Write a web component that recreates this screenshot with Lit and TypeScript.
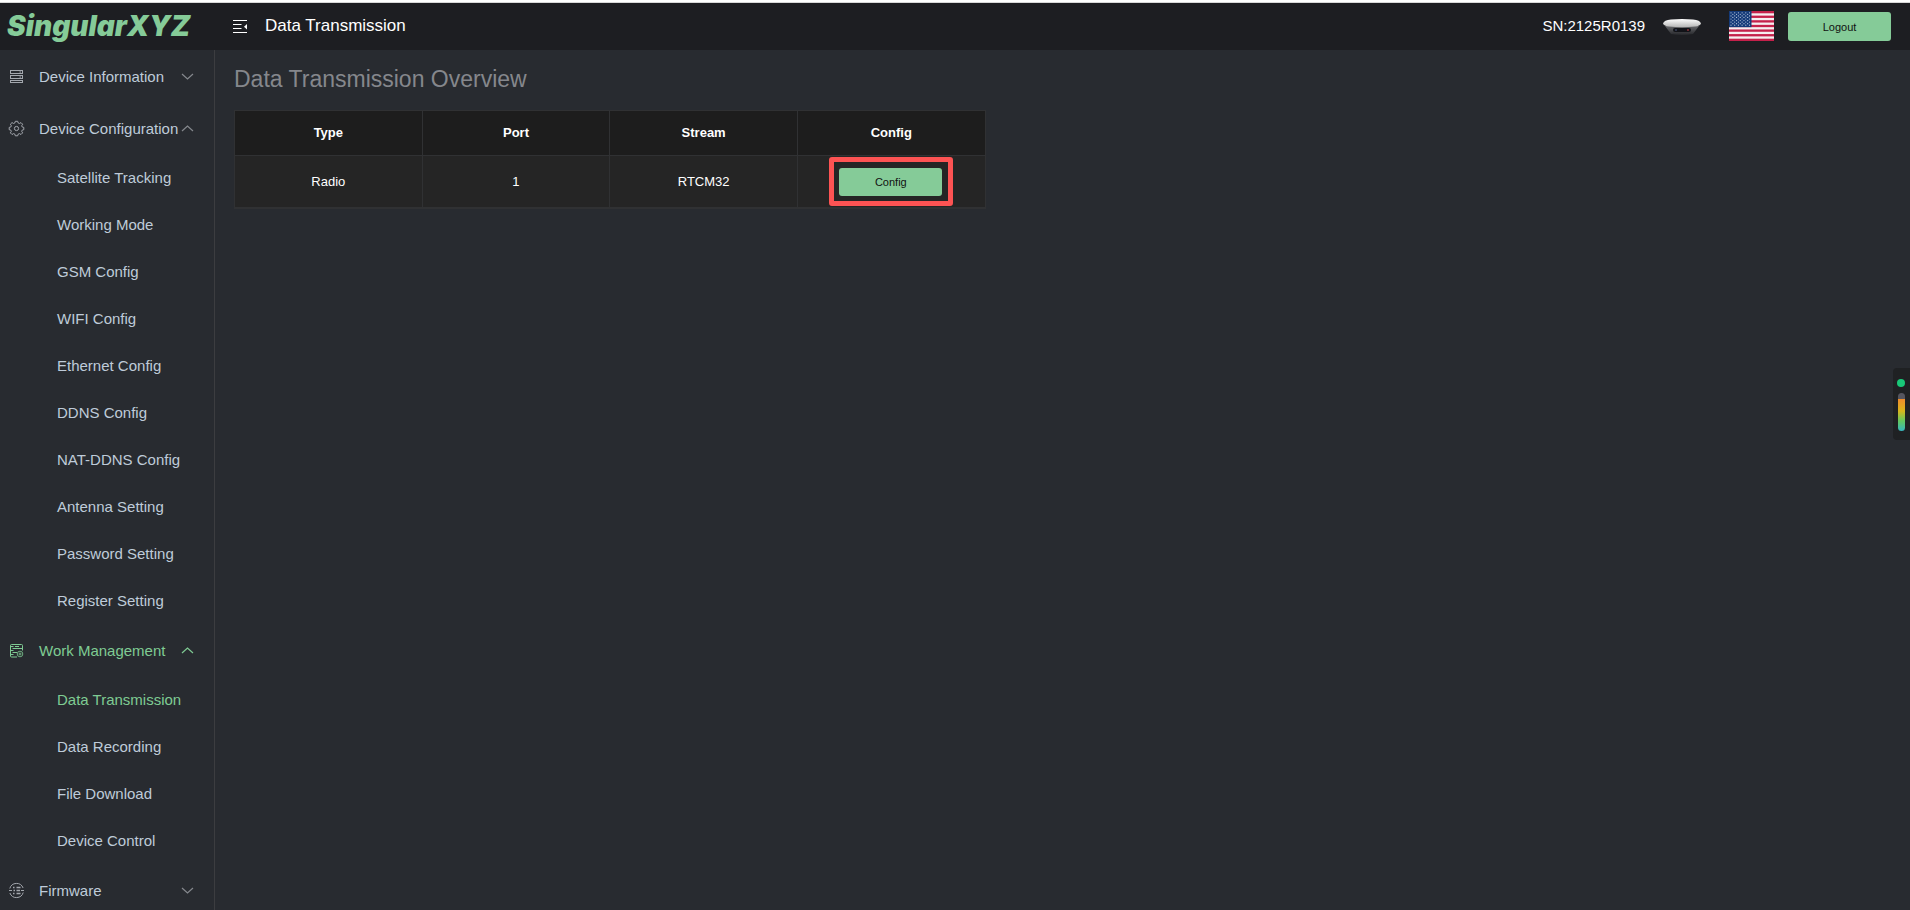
import { LitElement, html, css, svg, nothing } from "lit";
import { customElement, state } from "lit/decorators.js";

interface Group {
  label: string;
  icon: string;
  open: boolean;
  items: string[];
}

const icons: Record<string, unknown> = {
  server: svg`
    <path d="M2 2.500h13M2 5.500h13M2 7.500h13M2 10.500h13M2 12.500h13M2 14.500h13" />
    <path d="M2.500 2v4M14.500 2v4M2.500 7v4M14.500 7v4M2.500 12v3M14.500 12v3M11.500 4h1.500M11.500 9h1.500" />`,
  gear: svg`
    <circle cx="8.500" cy="8.500" r="2.100" />
    <path stroke-linejoin="round" d="M6.800 3 7.300 1.300h2.400l.5 1.700 1.200.5 1.600-.9 1.600 1.600-.9 1.600.5 1.200 1.600.4v2.300l-1.600.4-.5 1.200.9 1.600-1.600 1.600-1.600-.9-1.200.5-.5 1.700H7.300l-.5-1.700-1.200-.5-1.600.9-1.600-1.600.9-1.600-.5-1.200-1.600-.4V7.400l1.600-.4.5-1.200-.9-1.600 1.600-1.600 1.600.9z" />`,
  work: svg`
    <path d="M14.500 8.500V3.500a1 1 0 0 0-1-1h-10a1 1 0 0 0-1 1v10.500a1 1 0 0 0 1 1H9M4.500 6.500h10M4.500 10.500h4.500M3 4.500h2.500M7 4.500h4M3 8.500h2.500M3 12.500h2.500" />
    <circle cx="12" cy="12" r="2.800" stroke-width=".8" /><circle cx="12" cy="12" r="1" stroke-width=".8" />`,
  firmware: svg`
    <path d="M1.800 6.500a7 7 0 0 1 13.300-.5M15.200 10.500a7 7 0 0 1-13.300.5M1 8.500h3M13 8.500h3" />
    <path d="M5 5.500h1.500M8.500 5.500h4M5.500 8.500h1.500M8.500 8.500h3.500M5 11.500h1.500M8.500 11.500h4" stroke-width="1.300" />`,
};

@customElement("app-root")
export class AppRoot extends LitElement {
  @state() private groups: Group[] = [
    { label: "Device Information", icon: "server", open: false, items: [] },
    {
      label: "Device Configuration",
      icon: "gear",
      open: true,
      items: [
        "Satellite Tracking", "Working Mode", "GSM Config", "WIFI Config", "Ethernet Config",
        "DDNS Config", "NAT-DDNS Config", "Antenna Setting", "Password Setting", "Register Setting",
      ],
    },
    {
      label: "Work Management",
      icon: "work",
      open: true,
      items: ["Data Transmission", "Data Recording", "File Download", "Device Control"],
    },
    { label: "Firmware", icon: "firmware", open: false, items: [] },
  ];

  @state() private current = "Data Transmission";

  private rows = [{ type: "Radio", port: "1", stream: "RTCM32" }];

  static styles = css`
    :host {
      display: flex;
      flex-direction: column;
      height: 100vh;
      box-sizing: border-box;
      border-top: 2px solid #fff;
      background: #282b30;
      color: #fff;
      font-family: "Liberation Sans", Arial, sans-serif;
      font-size: 15px;
      overflow: hidden;
    }
    * { box-sizing: border-box; }
    header {
      display: flex;
      align-items: center;
      flex: none;
      height: 48px;
      padding: 0 19px 0 7px;
      border-top: 1px solid #d8d8d8;
      background: #1d1e22;
    }
    .logo {
      width: 188px;
      padding-bottom: 2px;
      color: #85cb98;
      font: italic 900 28px/36px Inter, sans-serif;
      white-space: nowrap;
    }
    .fold {
      display: flex;
      margin-left: 36px;
      padding: 0;
      border: 0;
      background: none;
      color: #fff;
    }
    .title { flex: 1; margin: 0 0 0 17px; padding-bottom: 2px; font-size: 17px; line-height: 20px; font-weight: 400; }
    .serial { padding-bottom: 2px; line-height: 20px; }
    .device { width: 42px; height: 20px; margin-left: 16px; }
    .flag { display: flex; margin-left: 26px; padding: 0 0 2px; border: 0; background: none; }
    .btn {
      width: 103px;
      height: 28px;
      padding: 0;
      border: 0;
      border-radius: 3px;
      background: #85cb98;
      color: #111;
      font: 11px/28px "Liberation Sans", Arial, sans-serif;
    }
    .btn.logout { height: 29px; margin-left: 14px; }
    .body { display: flex; flex: 1; min-height: 0; }
    nav {
      flex: none;
      width: 215px;
      border-right: 1px solid #3c3d40;
      overflow: hidden;
    }
    ul { margin: 0; padding: 0; list-style: none; }
    .group {
      display: flex;
      align-items: center;
      width: 100%;
      height: 52px;
      padding: 0 20px 0 8px;
      border: 0;
      background: none;
      color: #bfcbd9;
      font: inherit;
      text-align: left;
    }
    .group span { flex: 1; margin-left: 14px; white-space: nowrap; }
    .group .mark { color: #a3a7ad; }
    .group .arrow { color: #85888d; }
    .group.on, .group.on .mark, .group.on .arrow { color: #7fcb93; }
    .item {
      display: block;
      height: 47px;
      padding-left: 57px;
      line-height: 48px;
      color: #bfcbd9;
      text-decoration: none;
    }
    .item.on { color: #7fcb93; }
    svg { flex: none; display: block; }
    main { flex: 1; min-width: 0; padding: 14px 36px 14px 19px; }
    h2 { margin: 0; font-size: 23px; line-height: 30px; font-weight: 400; color: #85878c; }
    table {
      width: calc(100% * 11 / 24);
      margin-top: 16px;
      border-collapse: collapse;
      table-layout: fixed;
      border: 1px solid #303133;
      border-bottom-width: 2px;
      background: #252525;
      font-size: 13px;
      text-align: center;
    }
    th, td { padding: 0; border: 1px solid #303133; }
    th { height: 45px; padding-bottom: 2px; background: #1d1d1d; font-weight: 700; }
    td { height: 52px; }
    .focus {
      display: inline-block;
      padding: 6px 6px 5px 5px;
      border: 5px solid #fd5353;
      border-radius: 3px;
      vertical-align: middle;
    }
    .focus .btn { display: block; }
    .meter {
      position: absolute;
      right: 0;
      top: 368px;
      display: flex;
      flex-direction: column;
      align-items: center;
      gap: 6px;
      width: 17px;
      height: 72px;
      padding: 11px 1px 0 0;
      border-radius: 4px 0 0 4px;
      background: #1f2123;
    }
    .dot { width: 8px; height: 8px; border-radius: 50%; background: #19c878; }
    .bar {
      width: 7px;
      height: 38px;
      border-radius: 4px;
      background: linear-gradient(#55555e 6px, #ef8b2c 6px, #d8b51c 18px, #62c860 28px, #35b6c0);
    }
  `;

  private toggle(group: Group) {
    this.groups = this.groups.map((g) => (g === group ? { ...g, open: !g.open } : g));
  }

  private renderGroup(g: Group) {
    const on = g.items.includes(this.current);
    return html`<li>
      <button class="group ${on ? "on" : ""}" aria-expanded=${g.open} @click=${() => this.toggle(g)}>
        <svg class="mark" width="17" height="17" viewBox="0 0 17 17" fill="none" stroke="currentColor" aria-hidden="true">
          ${icons[g.icon]}
        </svg>
        <span>${g.label}</span>
        <svg class="arrow" width="14" height="14" viewBox="0 0 14 14" fill="none" stroke="currentColor" stroke-width="1.2" aria-hidden="true">
          <path d=${g.open ? "M2 10 7.500 5 13 10" : "M2 5 7.500 10 13 5"} />
        </svg>
      </button>
      ${g.open && g.items.length
        ? html`<ul>
            ${g.items.map(
              (i) => html`<li>
                <a class="item ${i === this.current ? "on" : ""}" href="#" @click=${() => (this.current = i)}>${i}</a>
              </li>`
            )}
          </ul>`
        : nothing}
    </li>`;
  }

  private renderFlag() {
    const stars: unknown[] = [];
    for (let r = 0; r < 9; r++) {
      for (let c = 0; c < (r % 2 ? 5 : 6); c++) {
        stars.push(svg`<circle cx=${2 + c * 3.7 + (r % 2 ? 1.85 : 0)} cy=${1.8 + r * 1.55} r=".6" />`);
      }
    }
    return html`<svg width="45" height="30" viewBox="0 0 45 30" aria-hidden="true">
      <path fill="#f5eef0" d="M0 0h45v30H0z" />
      ${[0, 1, 2, 3, 4, 5, 6].map((i) => svg`<rect y=${(i * 60) / 13} width="45" height=${30 / 13} fill="#c4204a" />`)}
      <path fill="#143a78" d="M0 0h22.500v16.150H0z" />
      <g fill="#b9c6dc">${stars}</g>
    </svg>`;
  }

  render() {
    return html`
      <header>
        <span class="logo">SingularXYZ</span>
        <button class="fold" aria-label="Collapse menu">
          <svg width="17" height="16" viewBox="0 0 17 16" fill="none" stroke="currentColor" stroke-width="1.2" aria-hidden="true">
            <path d="M2 1.500h14M2 5.500h8.500M2 9.500h8.500M2 13.500h14" />
            <path d="M16 5v5.500l-3-2.750z" fill="currentColor" stroke="none" />
          </svg>
        </button>
        <h1 class="title">Data Transmission</h1>
        <span class="serial">SN:2125R0139</span>
        <svg class="device" viewBox="0 0 42 20" aria-hidden="true">
          <defs>
            <linearGradient id="shell" x2="0" y2="1"><stop offset="0" stop-color="#fff" /><stop offset="1" stop-color="#b5b5b5" /></linearGradient>
            <linearGradient id="base" x2="0" y2="1"><stop offset="0" stop-color="#66676a" /><stop offset="1" stop-color="#26272b" /></linearGradient>
          </defs>
          <path fill="url(#base)" d="M4 9h34l-6 8q-11 2-22 0z" />
          <path fill="url(#shell)" d="M2 6.500Q3 3 10 2.500q11-1 22 0 7 .5 8 4-1 2.500-6 3-13 1.500-26 0-5-.5-6-3z" />
          <rect x="12" y="11" width="18" height="4" rx="2" fill="#121318" />
          <circle cx="15" cy="13" r="1" fill="#39405a" /><circle cx="27" cy="13" r="1" fill="#873036" />
        </svg>
        <button class="flag" aria-label="Language">${this.renderFlag()}</button>
        <button class="btn logout">Logout</button>
      </header>
      <div class="body">
        <nav><ul>${this.groups.map((g) => this.renderGroup(g))}</ul></nav>
        <main>
          <h2>Data Transmission Overview</h2>
          <table>
            <thead>
              <tr><th scope="col">Type</th><th scope="col">Port</th><th scope="col">Stream</th><th scope="col">Config</th></tr>
            </thead>
            <tbody>
              ${this.rows.map(
                (r) => html`<tr>
                  <td>${r.type}</td><td>${r.port}</td><td>${r.stream}</td>
                  <td><span class="focus"><button class="btn">Config</button></span></td>
                </tr>`
              )}
            </tbody>
          </table>
        </main>
      </div>
      <div class="meter" aria-hidden="true"><div class="dot"></div><div class="bar"></div></div>
    `;
  }
}
